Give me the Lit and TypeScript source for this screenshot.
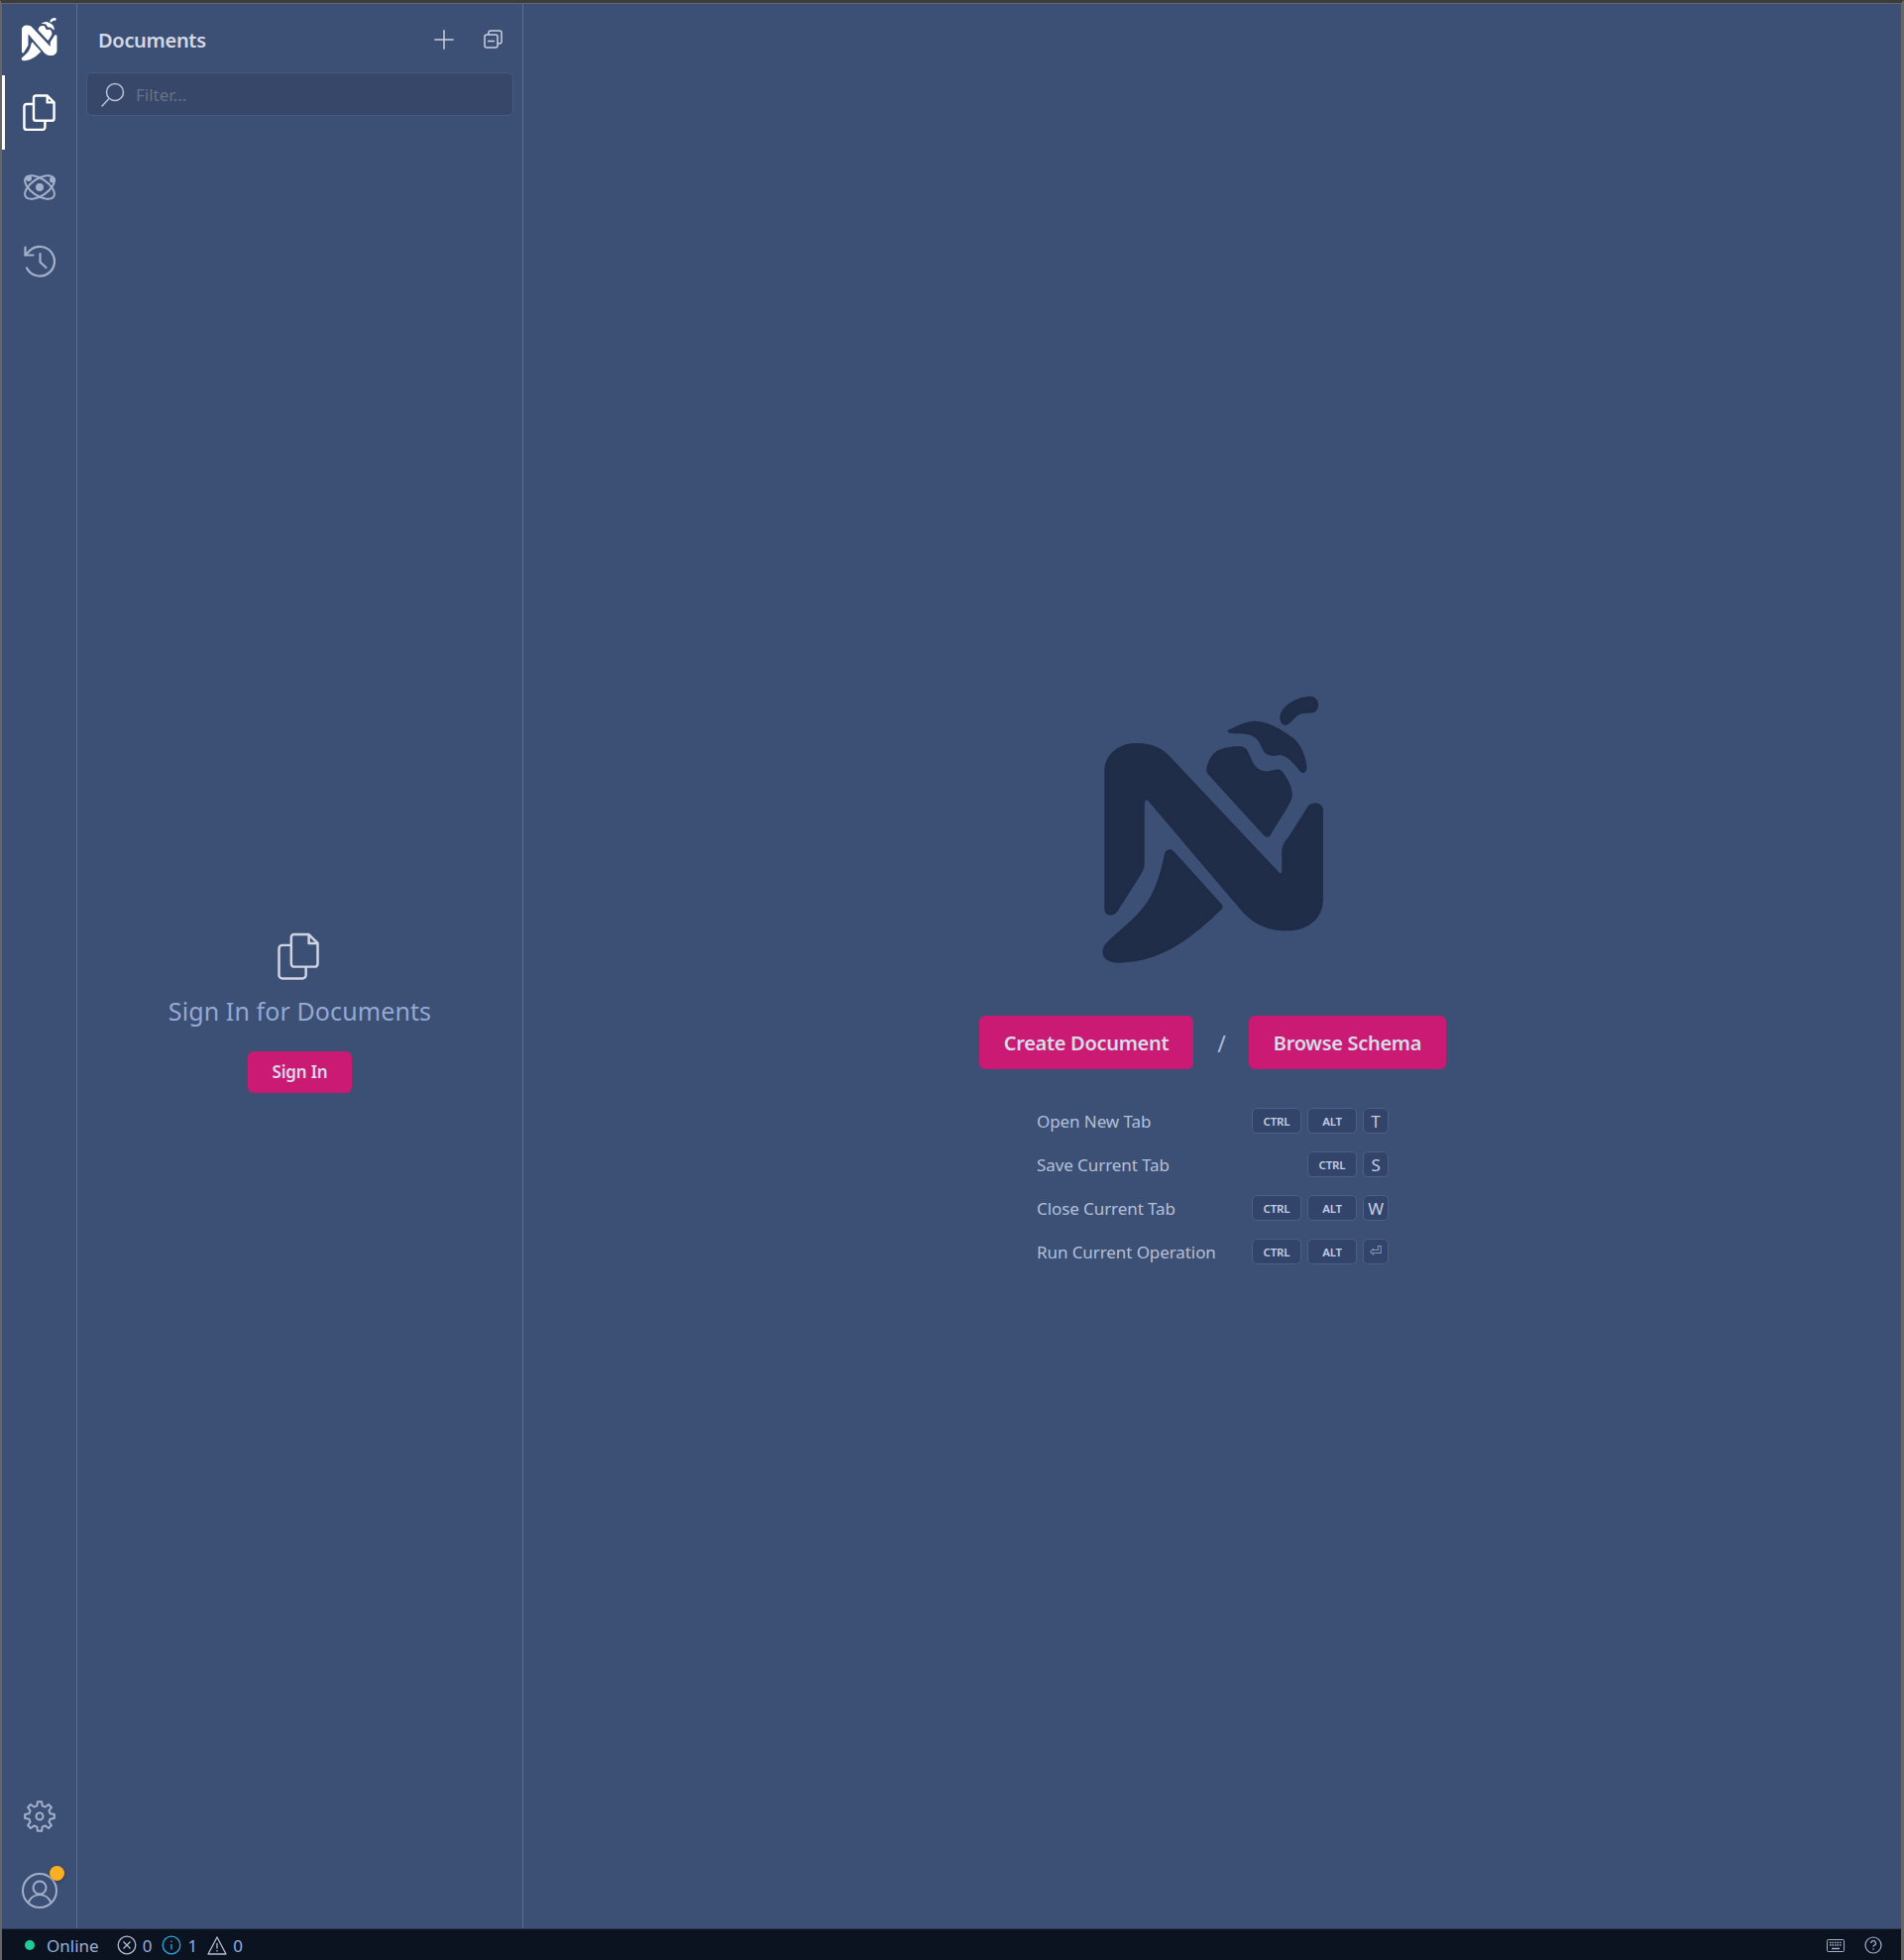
import { LitElement, html, css, svg } from "lit";
import { customElement } from "lit/decorators.js";

const logo = svg`
<path d="M103 295C103 245 145 210 200 210C245 210 280 225 305 255L630 600C637 610 642 600 640 590L640 540C640 520 650 505 660 495L720 400C735 385 765 390 765 415L765 680C765 740 720 778 655 778C600 778 560 760 525 725L240 390C232 378 224 382 224 395L224 570C224 590 218 600 210 612L145 715C132 738 103 735 103 710Z"/>
<path d="M285 545C290 530 305 527 315 540L458 698C463 705 460 712 452 718C350 815 270 870 150 875C105 877 85 850 105 820C130 790 175 760 210 720C250 675 270 620 285 545Z"/>
<path d="M412 290C412 280 420 255 435 240C450 225 490 218 515 220C535 222 540 240 550 265C560 285 575 297 600 295C615 292 630 285 640 295C660 320 675 350 670 375C665 395 640 430 605 488C600 497 590 495 582 485L418 305C412 298 412 295 412 290Z"/>
<path d="M478 170C500 160 530 143 560 143C600 145 640 170 675 195C700 215 715 260 715 285C713 303 700 303 695 295C680 275 660 250 635 245C615 250 595 250 585 235C575 215 570 195 545 185C525 180 500 182 485 180C475 178 475 172 478 170Z"/>
<path d="M635 125C640 100 680 70 725 68C750 68 760 100 740 115C730 122 710 115 690 125C675 132 665 155 650 155C640 155 632 140 635 125Z"/>`;

const docs = svg`
<path d="M14 4.500A3 3 0 0 1 17 2H32L41 11V32A3 3 0 0 1 38 35H17A3 3 0 0 1 14 32Z"/>
<path d="M32 2V11H41"/>
<path d="M14 13H5A3.500 3.500 0 0 0 1.500 16.500V43.500A3.500 3.500 0 0 0 5 47H25.500A3.500 3.500 0 0 0 29 43.500V35"/>`;

function gearPath(): string {
  const pts: string[] = [];
  const p = (r: number, deg: number) => {
    const a = (deg * Math.PI) / 180;
    return `${(16 + r * Math.cos(a)).toFixed(2)} ${(16 + r * Math.sin(a)).toFixed(2)}`;
  };
  for (let i = 0; i < 8; i++) {
    const c = i * 45 - 90;
    pts.push(p(15, c - 8), p(15, c + 8), p(11, c + 14), p(11, c + 31));
  }
  return `M${pts.join("L")}Z`;
}

const shortcuts: [string, string[]][] = [
  ["Open New Tab", ["CTRL", "ALT", "T"]],
  ["Save Current Tab", ["CTRL", "S"]],
  ["Close Current Tab", ["CTRL", "ALT", "W"]],
  ["Run Current Operation", ["CTRL", "ALT", "⏎"]],
];

@customElement("app-root")
export class AppRoot extends LitElement {
  static styles = css`
    :host { display: block; width: 1921px; height: 1978px; font-family: "Noto Sans", "Open Sans", sans-serif; }
    * { box-sizing: border-box; }
    .frame { width: 100%; height: 100%; display: flex; flex-direction: column; background: #3c4f74;
      border-left: 2px solid #666; border-right: 3px solid #666; border-top: 3px solid #3c3c3c; }
    .body { flex: 1; display: flex; min-height: 0; border-top: 1px solid #666; }
    .rail { width: 76px; flex: none; border-right: 1px solid #5a6d92; display: flex; flex-direction: column; padding-bottom: 1px; }
    .rail-item { height: 75px; flex: none; display: flex; align-items: center; justify-content: center; position: relative; color: #a3b0cc; }
    .rail-item.logo { height: 72px; color: #fff; }
    .logo svg { margin-top: -2px; }
    .rail-item.active { color: #fff; border-left: 3px solid #fff; padding-right: 3px; }
    .spacer { flex: 1; }
    .badge { position: absolute; left: 48px; top: 13px; width: 15px; height: 15px; border-radius: 50%; background: #fbb024; box-shadow: 0 1px 3px rgba(0,0,0,.3); }
    .panel { width: 450px; flex: none; border-right: 1px solid #5a6d92; display: flex; flex-direction: column; }
    .panel-head { height: 69px; flex: none; display: flex; align-items: center; padding: 4px 20px 0 21px; color: #c9d0e0; }
    .title { flex: 1; font-size: 20px; font-weight: 600; letter-spacing: -0.3px; color: #d3d8e5; }
    .head-btn { display: flex; margin-left: 30px; margin-top: -2px; }
    .filter { height: 44px; width: 431px; flex: none; margin-left: 9px; background: #37476a; border: 1px solid #475a80; border-radius: 6px; display: flex; align-items: center; gap: 11px; padding: 0 14px; color: #697284; font-size: 17px; }
    .signin { flex: 1; display: flex; flex-direction: column; align-items: center; justify-content: center; padding-bottom: 20px; }
    .signin svg { color: #d0d5e2; margin-left: -4px; }
    .signin-text { font-size: 25px; line-height: 32px; margin-top: 15px; color: #93a9d3; letter-spacing: 0.1px; }
    .btn { background: #cb1a74; color: #d7dbe7; border-radius: 6px; font-weight: 600; display: flex; align-items: center; justify-content: center; }
    .btn.small { width: 105px; height: 42px; margin-top: 25px; font-size: 17px; letter-spacing: -0.2px; }
    .btn.large { height: 54px; font-size: 20px; letter-spacing: -0.3px; padding-left: 1px; }
    .main { flex: 1; display: flex; flex-direction: column; align-items: center; justify-content: center; padding-top: 6px; min-width: 0; }
    .mark { color: #202d49; display: block; margin-left: 3px; }
    .actions { display: flex; align-items: center; margin-top: 45px; }
    .create { width: 216px; }
    .browse { width: 199px; }
    .slash { width: 56px; text-align: center; font-size: 23px; line-height: 28px; color: #a8bbdc; padding: 2px 0 0 2px; }
    .keys { width: 354px; margin-top: 39px; margin-left: 2px; display: flex; flex-direction: column; gap: 18px; }
    .row { height: 26px; display: flex; align-items: center; color: #b3c0d9; font-size: 17px; letter-spacing: -0.08px; }
    .row-label { flex: 1; margin-left: -1px; }
    .key-list { display: flex; gap: 6px; }
    kbd { height: 26px; min-width: 26px; padding: 0; display: flex; align-items: center; justify-content: center; background: #33446a; border: 1px solid #4c5f85; border-radius: 5px; color: #c5cde0; font-family: inherit; font-size: 11.500px; font-weight: 600; letter-spacing: -0.2px; }
    kbd.word { width: 50px; }
    kbd.single { font-size: 17px; font-weight: 400; }
    kbd.enter { font-family: "DejaVu Sans", sans-serif; font-size: 15px; font-weight: 400; color: #98a6c2; }
    .status { height: 32px; flex: none; background: #0c1320; border-top: 1px solid #2b3953; display: flex; align-items: center; color: #94b0df; font-size: 17px; padding: 1px 19px 0 23px; }
    .dot { width: 10px; height: 10px; border-radius: 50%; background: #1fce96; margin-right: 12px; }
    .status svg { display: block; }
    .online { margin-right: 18px; }
    .stat { display: flex; align-items: center; gap: 6px; margin-right: 10px; }
    .status-right { margin-left: auto; display: flex; align-items: center; gap: 20px; color: #a3b0cc; }
  `;

  private doc(w: number, h: number, stroke: number) {
    return html`<svg width=${w} height=${h} viewBox="0 0 42.500 48.500" fill="none" stroke="currentColor" stroke-width=${stroke} stroke-linejoin="round">${docs}</svg>`;
  }

  render() {
    return html`<div class="frame">
      <div class="body">
        <nav class="rail">
          <div class="rail-item logo">
            <svg width="37" height="45" viewBox="85 55 690 830" fill="currentColor">${logo}</svg>
          </div>
          <div class="rail-item active">${this.doc(33, 37, 3.200)}</div>
          <div class="rail-item">
            <svg width="34" height="32" viewBox="0 0 34 32" fill="none" stroke="currentColor" stroke-width="2">
              <ellipse cx="17" cy="16" rx="17" ry="8.500" transform="rotate(34 17 16)"/>
              <ellipse cx="17" cy="16" rx="17" ry="8.500" transform="rotate(-34 17 16)"/>
              <circle cx="17" cy="16" r="4" fill="currentColor" stroke="none"/>
              <circle cx="6" cy="7" r="3" fill="currentColor" stroke="none"/>
              <circle cx="30" cy="8.500" r="3" fill="currentColor" stroke="none"/>
            </svg>
          </div>
          <div class="rail-item">
            <svg width="32" height="33" viewBox="0 0 32 33" fill="none" stroke="currentColor" stroke-width="2.200" stroke-linecap="round" stroke-linejoin="round">
              <path d="M1.500 2.500V10.500H9.500"/>
              <path d="M1.500 10.500L6 6A14.800 14.800 0 1 1 3 23.500"/>
              <path d="M16.500 9V17.500L22.500 23"/>
            </svg>
          </div>
          <div class="spacer"></div>
          <div class="rail-item">
            <svg width="32" height="32" viewBox="0 0 32 32" fill="none" stroke="currentColor" stroke-width="2" stroke-linejoin="round">
              <circle cx="16" cy="16" r="3.500"/>
              <path d=${gearPath()}/>
            </svg>
          </div>
          <div class="rail-item">
            <svg width="36" height="36" viewBox="0 0 36 36" fill="none" stroke="currentColor" stroke-width="2">
              <circle cx="18" cy="18" r="17"/>
              <circle cx="18" cy="15" r="6.500"/>
              <path d="M6.500 30C8.500 25.500 13 22 18 22S27.500 25.500 29.500 30"/>
            </svg>
            <span class="badge"></span>
          </div>
        </nav>
        <aside class="panel">
          <div class="panel-head">
            <div class="title">Documents</div>
            <span class="head-btn">
              <svg width="20" height="20" viewBox="0 0 20 20" stroke="currentColor" stroke-width="1.500" stroke-linecap="round"><path d="M10 .8V19.200M.8 10H19.200"/></svg>
            </span>
            <span class="head-btn">
              <svg width="19" height="19" viewBox="0 0 19 19" fill="none" stroke="currentColor" stroke-width="1.500"><rect x="1" y="5" width="13" height="13" rx="2"/><path d="M5 5V3A2 2 0 0 1 7 1H16A2 2 0 0 1 18 3V12A2 2 0 0 1 16 14H14"/><path d="M4 11.500H11"/></svg>
            </span>
          </div>
          <div class="filter">
            <svg width="24" height="25" viewBox="0 0 24 25" fill="none" stroke="#b7c2d8" stroke-width="1.500" stroke-linecap="round"><circle cx="14" cy="10" r="8.500"/><path d="M8 16.500L1 24"/></svg>
            <span>Filter...</span>
          </div>
          <div class="signin">
            ${this.doc(42, 48, 2.500)}
            <div class="signin-text">Sign In for Documents</div>
            <div class="btn small">Sign In</div>
          </div>
        </aside>
        <main class="main">
          <svg class="mark" width="290" height="300" viewBox="0 0 870 900" fill="currentColor">
            <defs>
              <filter id="inset" x="0" y="0" width="100%" height="100%" color-interpolation-filters="sRGB">
                <feComponentTransfer in="SourceAlpha" result="inv"><feFuncA type="table" tableValues="1 0"/></feComponentTransfer>
                <feGaussianBlur in="inv" stdDeviation="5" result="blur"/>
                <feFlood flood-color="#17223a" flood-opacity="0.5"/>
                <feComposite in2="blur" operator="in"/>
                <feComposite in2="SourceAlpha" operator="in" result="rim"/>
                <feMerge><feMergeNode in="SourceGraphic"/><feMergeNode in="rim"/></feMerge>
              </filter>
            </defs>
            <g filter="url(#inset)">${logo}</g>
          </svg>
          <div class="actions">
            <div class="btn large create">Create Document</div>
            <div class="slash">/</div>
            <div class="btn large browse">Browse Schema</div>
          </div>
          <div class="keys">
            ${shortcuts.map(([label, keys]) => html`<div class="row">
              <span class="row-label">${label}</span>
              <span class="key-list">${keys.map((k) => html`<kbd class=${k === "⏎" ? "enter" : k.length > 1 ? "word" : "single"}>${k}</kbd>`)}</span>
            </div>`)}
          </div>
        </main>
      </div>
      <footer class="status">
        <span class="dot"></span>
        <span class="online">Online</span>
        <span class="stat">
          <svg width="20" height="20" viewBox="0 0 20 20" fill="none" stroke="#b4bed2" stroke-width="1.300"><circle cx="10" cy="10" r="8.800"/><path d="M6.500 6.500L13.500 13.500M13.500 6.500L6.500 13.500"/></svg>0
        </span>
        <span class="stat">
          <svg width="20" height="20" viewBox="0 0 20 20" fill="none" stroke="#2ea8e0" stroke-width="1.300"><circle cx="10" cy="10" r="8.800"/><path d="M10 9V14.500M10 5.500V7"/></svg>1
        </span>
        <span class="stat">
          <svg width="20" height="19" viewBox="0 0 20 19" fill="none" stroke="#b4bed2" stroke-width="1.300" stroke-linejoin="round"><path d="M10 1L19 18H1Z"/><path d="M10 7V12.500M10 14V15.500"/></svg>0
        </span>
        <span class="status-right">
          <svg width="18" height="13" viewBox="0 0 18 13" fill="none" stroke="currentColor" stroke-width="1"><rect x=".5" y=".5" width="17" height="12" rx="1"/><path d="M3 3.500H15M3 6H15" stroke-width="1.500" stroke-dasharray="1.500 1"/><path d="M5 9.500H13" stroke-width="1.500"/></svg>
          <svg width="18" height="18" viewBox="0 0 18 18" fill="none" stroke="currentColor" stroke-width="1.200"><circle cx="9" cy="9" r="8"/><path d="M6.700 7A2.400 2.400 0 1 1 9.800 9.300C9.200 9.600 9 10 9 10.800M9 12.300V13.700"/></svg>
        </span>
      </footer>
    </div>`;
  }
}
